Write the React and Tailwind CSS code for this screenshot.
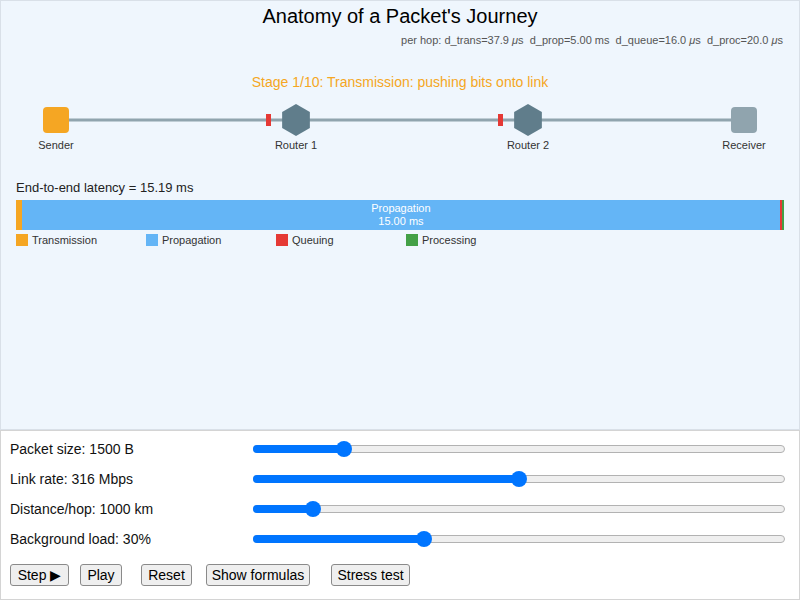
import React from "react";

const colors = {
  trans: "#f5a623",
  prop: "#64b5f6",
  queue: "#e53935",
  proc: "#43a047",
  link: "#90a4ae",
  router: "#607d8b",
};

// per-path totals in ms
const segments = [
  { key: "trans", label: "Transmission", ms: 0.1137 },
  { key: "prop", label: "Propagation", ms: 15.0 },
  { key: "queue", label: "Queuing", ms: 0.032 },
  { key: "proc", label: "Processing", ms: 0.044 },
];

const sliders = [
  { label: "Packet size: 1500 B", frac: 0.16 },
  { label: "Link rate: 316 Mbps", frac: 0.5 },
  { label: "Distance/hop: 1000 km", frac: 0.1 },
  { label: "Background load: 30%", frac: 30 / 95 },
];

const buttons = [
  { label: "Step ▶", w: "w-[59px]", ml: "ml-0" },
  { label: "Play", w: "w-[42px]", ml: "ml-[11px]" },
  { label: "Reset", w: "w-[51px]", ml: "ml-[19px]" },
  { label: "Show formulas", w: "w-[104px]", ml: "ml-[14px]" },
  { label: "Stress test", w: "w-[79px]", ml: "ml-[21px]" },
];

function Hex({ cx, cy, r }) {
  const pts = [];
  for (let i = 0; i < 6; i++) {
    const a = (Math.PI / 3) * i - Math.PI / 2;
    pts.push(`${(cx + r * Math.cos(a)).toFixed(2)},${(cy + r * Math.sin(a)).toFixed(2)}`);
  }
  return <polygon points={pts.join(" ")} fill={colors.router} />;
}

function Slider({ frac }) {
  const trackW = 532;
  const pos = 8 + frac * (trackW - 16);
  return (
    <div className="relative h-[16px] w-[532px]">
      <div className="absolute inset-x-0 top-[4px] h-[8px] rounded-full border border-[#b2b2b2] bg-[#efefef]" />
      <div className="absolute left-0 top-[4px] h-[8px] rounded-full bg-[#0075ff]" style={{ width: pos }} />
      <div className="absolute top-0 h-[16px] w-[16px] rounded-full bg-[#0075ff]" style={{ left: pos - 8 }} />
    </div>
  );
}

export default function App() {
  const total = segments.reduce((s, x) => s + x.ms, 0);
  const barW = 768;

  return (
    <div className="h-[602px] w-[800px] bg-white font-['Liberation_Sans',Arial,sans-serif] text-black">
      <div className="flex h-[430px] flex-col border border-[#d9e0e8] bg-[#eff6fd]">
        <h1 className="pt-[3px] text-center text-[20px] leading-[24px] font-normal">Anatomy of a Packet's Journey</h1>
        <p className="mt-[6px] pr-[16px] text-right text-[11px] leading-[13px] text-[#555]">
          per hop: d_trans=37.9 <i>μ</i>s&nbsp; d_prop=5.00 ms&nbsp; d_queue=16.0 <i>μ</i>s&nbsp; d_proc=20.0 <i>μ</i>s
        </p>
        <p className="mt-[27px] text-center text-[14px] leading-[16px] text-[#f5a623]">
          Stage 1/10: Transmission: pushing bits onto link
        </p>

        <svg width="798" height="70" viewBox="1 90 798 70" className="block">
          <line x1="69" y1="120" x2="731" y2="120" stroke={colors.link} strokeWidth="3" />
          <rect x="43" y="107" width="26" height="26" rx="4" fill={colors.trans} />
          <rect x="731" y="107" width="26" height="26" rx="4" fill={colors.link} />
          <Hex cx={296} cy={120} r={16} />
          <Hex cx={528} cy={120} r={16} />
          <rect x="266" y="114" width="5" height="12" fill={colors.queue} />
          <rect x="498" y="114" width="5" height="12" fill={colors.queue} />
          <g fontSize="11" fill="#333" textAnchor="middle">
            <text x="56" y="149">Sender</text>
            <text x="296" y="149">Router 1</text>
            <text x="528" y="149">Router 2</text>
            <text x="744" y="149">Receiver</text>
          </g>
        </svg>

        <div className="mt-[20px] pl-[15px]">
          <p className="text-[13px] leading-[16px] text-[#222]">End-to-end latency = 15.19 ms</p>
          <div className="mt-[4px] flex h-[30px] w-[768px]">
            {segments.map((s) => (
              <div
                key={s.key}
                className="flex h-full flex-col items-center justify-center overflow-hidden text-[11px] leading-[13px] text-white"
                style={{ width: (s.ms / total) * barW, backgroundColor: colors[s.key] }}
              >
                {s.key === "prop" && (
                  <>
                    <span>Propagation</span>
                    <span>15.00 ms</span>
                  </>
                )}
              </div>
            ))}
          </div>
          <div className="mt-[4px] flex">
            {segments.map((s) => (
              <div key={s.key} className="flex w-[130px] items-center">
                <span className="h-[12px] w-[12px]" style={{ backgroundColor: colors[s.key] }} />
                <span className="ml-[4px] text-[11px] leading-[12px] text-[#333]">{s.label}</span>
              </div>
            ))}
          </div>
        </div>
      </div>

      <div className="h-[170px] border border-[#d4d4d4] bg-white pl-[9px] pt-[3px]">
        {sliders.map((s) => (
          <div key={s.label} className="flex h-[30px] items-center">
            <span className="w-[243px] text-[14px] leading-[16px] text-[#111]">{s.label}</span>
            <Slider frac={s.frac} />
          </div>
        ))}
        <div className="mt-[10px] flex">
          {buttons.map((b) => (
            <button
              key={b.label}
              className={`${b.w} ${b.ml} h-[22px] rounded-[3px] border border-[#8a8a8a] bg-[#efefef] text-[14px] leading-[16px] text-black`}
            >
              {b.label}
            </button>
          ))}
        </div>
      </div>
    </div>
  );
}
